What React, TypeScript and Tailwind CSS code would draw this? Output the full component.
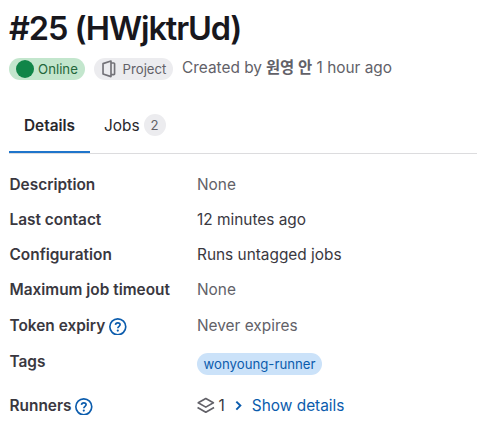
import type { ReactNode } from "react";

function HelpIcon() {
  return (
    <svg viewBox="0 0 16 16" className="mt-[2px] size-[17.6px] shrink-0 text-[#0b5cad]" fill="none" stroke="currentColor" strokeWidth="1.5">
      <circle cx="8" cy="8" r="7.25" />
      <path d="M5.9 6.3C6 5 6.9 4.4 8 4.4c1.200 0 2.100.75 2.100 1.850C10.100 7.600 8 7.700 8 9.400" />
      <circle cx="8" cy="11.400" r="1" fill="currentColor" stroke="none" />
    </svg>
  );
}

function ProjectIcon() {
  return (
    <svg viewBox="0 0 16 16" className="size-[17.6px] shrink-0 text-[#737278]" fill="none" stroke="currentColor" strokeWidth="1.5" strokeLinejoin="round">
      <path d="M2.750 3.300l7.250-2.400v14.200l-7.250-2.400z" />
      <path d="M10 2.750h2.500a.75.75 0 0 1 .75.75v9a.75.75 0 0 1-.75.75H10" />
    </svg>
  );
}

function StackIcon() {
  return (
    <svg viewBox="0 0 16 16" className="size-[17.6px] shrink-0 text-[#626168]" fill="none" stroke="currentColor" strokeWidth="1.500" strokeLinejoin="round">
      <path d="M8 1.400l6.900 3.900L8 9.200 1.100 5.300z" />
      <path d="M.5 9.600L8 13.900l7.500-4.300" />
    </svg>
  );
}

function Row({ label, help, height, children }: { label: string; help?: boolean; height: string; children: ReactNode }) {
  return (
    <div className={`flex items-center ${height}`}>
      <dt className="flex w-[188px] shrink-0 items-center gap-[4px] pl-[0.5px] font-semibold text-[#3a383f]">
        <span>{label}</span>
        {help && <HelpIcon />}
      </dt>
      <dd className="flex items-center">{children}</dd>
    </div>
  );
}

export default function App() {
  return (
    <main className="h-[423px] w-[477px] overflow-hidden bg-white pl-[9px] font-['Inter','Noto_Sans_CJK_KR',sans-serif] text-[15.400px] leading-[22px] whitespace-nowrap text-[#3a383f]">
      <h1 className="pt-[9px] text-[32.500px] leading-[40px] font-semibold tracking-[-1.100px] text-[#18171d]">#25 (HWjktrUd)</h1>
      <div className="mt-[8px] flex h-[24px] items-center">
        <span className="flex h-[22px] w-[76px] items-center gap-[4.500px] rounded-full bg-[#c3e6cd] pl-[7px] text-[13.200px] text-[#24663b]">
          <span className="size-[17.600px] shrink-0 rounded-full bg-[#108548]" />
          Online
        </span>
        <span className="ml-[9px] flex h-[22px] w-[79px] items-center gap-[5px] rounded-full bg-[#ececef] pl-[6px] text-[13.200px] text-[#626168]">
          <ProjectIcon />
          Project
        </span>
        <span className="-mt-[2px] ml-[9px] flex gap-[4px] text-[#626168]">
          <span>Created by</span>
          <b className="font-bold">원영 안</b>
          <span className="ml-[0.5px]">1 hour ago</span>
        </span>
      </div>
      <nav className="mt-[16px] flex h-[57px] border-b border-[#dcdcde]">
        <a className="flex h-[56px] w-[81px] items-center justify-center border-b-2 border-[#1f75cb] pt-[4px] font-semibold text-[#28272d]">Details</a>
        <a className="ml-[14px] flex h-[55px] items-center gap-[4px] pt-px text-[#28272d]">
          <span className="pt-[2px]">Jobs</span>
          <span className="flex size-[22px] items-center justify-center rounded-full bg-[#ececef] text-[13.200px] text-[#626168]">2</span>
        </a>
      </nav>
      <dl className="mt-[13px]">
        <Row label="Description" height="h-[35px]"><span className="text-[#626168]">None</span></Row>
        <Row label="Last contact" height="h-[35px]">12 minutes ago</Row>
        <Row label="Configuration" height="h-[35px]">Runs untagged jobs</Row>
        <Row label="Maximum job timeout" height="h-[35px]"><span className="text-[#626168]">None</span></Row>
        <Row label="Token expiry" help height="h-[37px]"><span className="text-[#626168]">Never expires</span></Row>
        <Row label="Tags" height="h-[36px]">
          <span className="mt-[3px] flex h-[22px] w-[125px] items-center justify-center rounded-full bg-[#cbe2f9] text-[13.200px] text-[#0b5cad]">wonyoung-runner</span>
        </Row>
        <Row label="Runners" help height="h-[51px]">
          <StackIcon />
          <span className="ml-[4px]">1</span>
          <svg viewBox="0 0 12 12" className="ml-[7px] size-[13px] text-[#0b5cad]" fill="none" stroke="currentColor" strokeWidth="1.800">
            <path d="M4 2.400l3.700 3.700L4 9.800" />
          </svg>
          <a className="ml-[7px] text-[#0b5cad]">Show details</a>
        </Row>
      </dl>
    </main>
  );
}
